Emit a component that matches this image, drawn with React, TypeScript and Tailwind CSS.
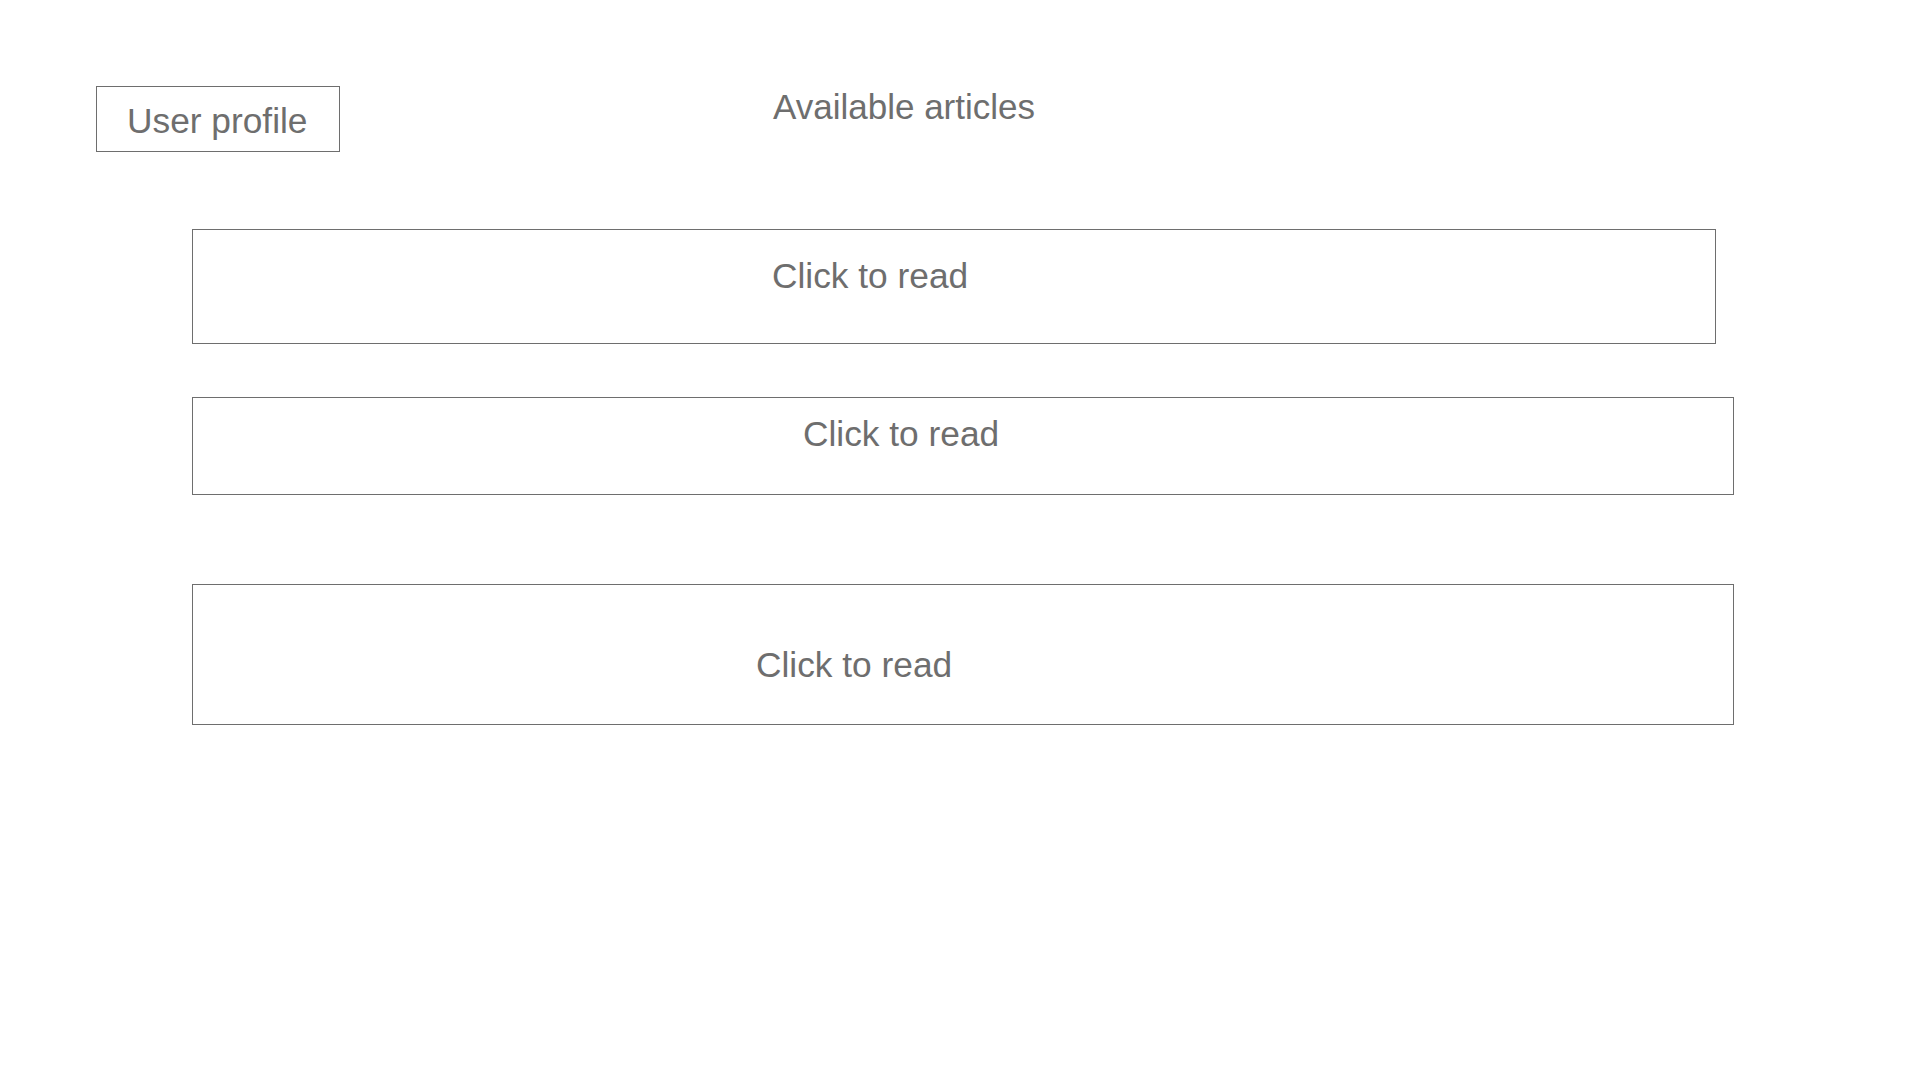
export default function App() {
  return (
    <main className="min-h-screen w-full bg-white text-[#6e6e6e] font-['Liberation_Sans',Arial,sans-serif] text-[35.3px] leading-[40px]">
      <div className="pl-[96px] pt-[86px]">
        <header className="flex items-start">
          <div className="w-[244px] h-[66px] border border-[#6e6e6e] pl-[30px] pt-[14px] cursor-pointer">
            User profile
          </div>
          <h1 className="ml-[433px] pt-[1px] text-[35px] font-normal leading-[40px]">
            Available articles
          </h1>
        </header>

        <section className="ml-[96px] mt-[77px] flex flex-col">
          <article className="w-[1524px] h-[115px] border border-[#6e6e6e] pl-[579px] pt-[26px]">
            Click to read
          </article>
          <article className="mt-[53px] w-[1542px] h-[98px] border border-[#6e6e6e] pl-[610px] pt-[16px]">
            Click to read
          </article>
          <article className="mt-[89px] w-[1542px] h-[141px] border border-[#6e6e6e] pl-[563px] pt-[60px]">
            Click to read
          </article>
        </section>
      </div>
    </main>
  );
}
